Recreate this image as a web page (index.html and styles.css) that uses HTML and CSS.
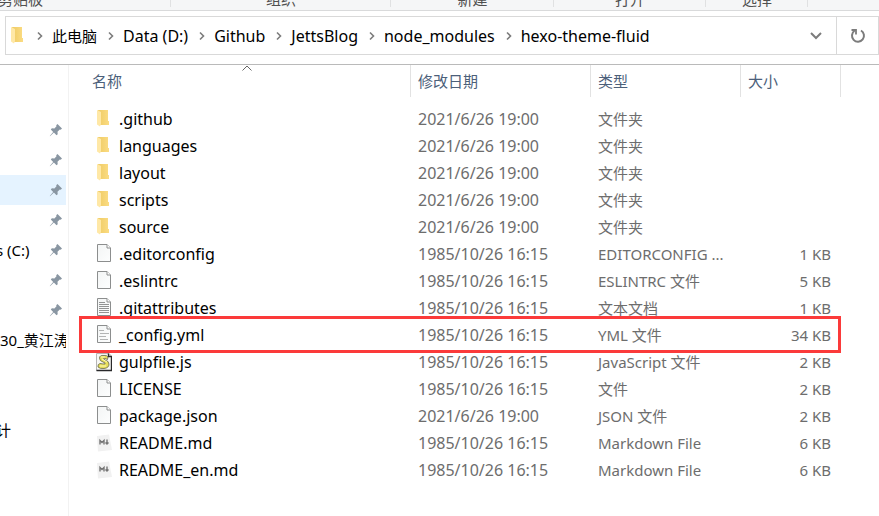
FILE: index.html
```html
<!DOCTYPE html>
<html lang="zh-CN">
<head>
<meta charset="utf-8">
<title>hexo-theme-fluid</title>
<link rel="stylesheet" href="styles.css">
</head>
<body>
<svg class="defs" aria-hidden="true">
  <defs>
    <linearGradient id="gold" x1="0" x2="1" y1="0" y2="0"><stop offset="0" stop-color="#efcb64"/><stop offset="1" stop-color="#fbdc83"/></linearGradient>
    <linearGradient id="paper" x1="0" x2="1" y1="0" y2="1"><stop offset="0" stop-color="#f3f5f5"/><stop offset="1" stop-color="#fdfefe"/></linearGradient>
    <symbol id="folder" viewBox="0 0 16 20">
      <path d="M2 1H12V12H13V16H4Z" fill="url(#gold)"/>
      <path d="M1 1L5 3V15L4 17.500L1 15.500Z" fill="#ffe8a6"/>
    </symbol>
    <symbol id="page" viewBox="0 0 16 20">
      <path d="M1.500 .5H11L14.500 4V17.500H1.500Z" fill="url(#paper)" stroke="#8c8e8e"/>
      <path d="M11 .5V4H14.500" fill="#fff" stroke="#8c8e8e"/>
    </symbol>
    <symbol id="text" viewBox="0 0 16 20">
      <use href="#page"/>
      <path d="M3 4.500H9M3 6.500H13M3 8.500H13M3 10.500H13M3 12.500H13M3 14.500H13" stroke="#929494"/>
    </symbol>
    <symbol id="config" viewBox="0 0 16 20">
      <use href="#page"/>
      <path d="M3 5.500H8M4 8.500H13M3 11.500H10M4 14.500H12" stroke="#b2b4b4"/>
    </symbol>
    <symbol id="script" viewBox="0 0 16 20">
      <path d="M.5 1.500H13L15.500 4V18.500H.5Z" fill="#f7f7f4" stroke="#b5b5b5"/>
      <path d="M.5 18.500H15.500V4M12.500 1.500V4.500H15.500" fill="none" stroke="#29292b" stroke-width="1.400"/>
      <path d="M12 5Q11 3 8 3.500Q3.500 3 3.500 6Q3.500 9 7 10Q10 11 9 12Q7 12 4 11.500Q1.500 12 2 15Q4 17 8 16.500Q13 16 13 12Q13 9 9 8Q7 7 8 6L11.500 7.500Z" fill="#e7df5c" stroke="#66664a" stroke-width=".8"/>
      <path d="M5 5H9M6 7L11 10M4 14H10" stroke="#fffbb4"/>
    </symbol>
    <symbol id="markdown" viewBox="0 0 16 20">
      <path d="M1 3L13 1.500L16 17L2 18.500Z" fill="#f1f1f1"/>
      <path d="M4 11.500V7.500L6 9.500L8 7.500V11.500M11 6.500V11M9.500 9.500L11 11L12.500 9.500" fill="none" stroke="#747474" stroke-width="1.400"/>
    </symbol>
    <symbol id="pin" viewBox="0 0 14 14">
      <path d="M8.500 1L13 5.500L11.700 6.800L10.800 6.500L8.500 8.800L8.700 11.200L7.500 12.200L4.900 9.600L1 13.200L.8 13L4.200 8.900L1.800 6.400L2.900 5.300L5.400 5.500L7.500 3.300L7.200 2.300Z" fill="#8996a2"/>
    </symbol>
    <symbol id="next" viewBox="0 0 8 10"><path d="M2 1.500L5.500 5L2 8.500" fill="none" stroke="#7c7c7c" stroke-width="1.600"/></symbol>
  </defs>
</svg>

<header class="ribbon">
  <span class="group first">剪贴板</span><span class="group">组织</span><span class="group">新建</span><span class="group">打开</span><span class="group">选择</span>
</header>

<div class="location">
  <nav class="path" aria-label="地址">
    <svg class="icon"><use href="#folder"/></svg>
    <svg class="next"><use href="#next"/></svg><a class="han" href="#">此电脑</a>
    <svg class="next"><use href="#next"/></svg><a href="#">Data (D:)</a>
    <svg class="next"><use href="#next"/></svg><a href="#">Github</a>
    <svg class="next"><use href="#next"/></svg><a href="#">JettsBlog</a>
    <svg class="next"><use href="#next"/></svg><a href="#">node_modules</a>
    <svg class="next"><use href="#next"/></svg><a href="#">hexo-theme-fluid</a>
  </nav>
  <button class="history" aria-label="以前的位置"><svg width="12" height="8" viewBox="0 0 12 8"><path d="M1 1L6 6L11 1" fill="none" stroke="#7c7c7c" stroke-width="2"/></svg></button>
  <button class="refresh" aria-label="刷新"><svg width="16" height="16" viewBox="0 0 16 16"><path d="M11 2.500A6 6 0 1 1 4.500 2.800" fill="none" stroke="#7c7c7c" stroke-width="2"/><path d="M1.500 2H6V6.500" fill="none" stroke="#7c7c7c" stroke-width="1.800"/></svg></button>
</div>

<main class="explorer">
  <nav class="sidebar" aria-label="导航">
    <a class="place" href="#" aria-label="固定"><svg class="pin"><use href="#pin"/></svg></a>
    <a class="place" href="#" aria-label="固定"><svg class="pin"><use href="#pin"/></svg></a>
    <a class="place current" href="#" aria-label="固定"><svg class="pin"><use href="#pin"/></svg></a>
    <a class="place" href="#" aria-label="固定"><svg class="pin"><use href="#pin"/></svg></a>
    <a class="place" href="#"><span class="cut">s (C:)</span><svg class="pin"><use href="#pin"/></svg></a>
    <a class="place" href="#" aria-label="固定"><svg class="pin"><use href="#pin"/></svg></a>
    <a class="place" href="#" aria-label="固定"><svg class="pin"><use href="#pin"/></svg></a>
    <a class="place" href="#"><span>30_黄江涛</span></a>
    <span class="place"></span>
    <span class="place"></span>
    <a class="place" href="#"><span class="cut">计</span></a>
  </nav>

  <div class="content">
    <table class="files">
      <colgroup><col><col class="date"><col class="type"><col class="size"></colgroup>
      <thead>
        <tr><th>名称<svg class="sort" viewBox="0 0 10 6"><path d="M.5 5.500L5 1L9.500 5.500" fill="none" stroke="#666"/></svg></th><th>修改日期</th><th>类型</th><th>大小</th></tr>
      </thead>
      <tbody>
        <tr><td><span class="name"><svg class="icon"><use href="#folder"/></svg>.github</span></td><td>2021/6/26 19:00</td><td>文件夹</td><td></td></tr>
        <tr><td><span class="name"><svg class="icon"><use href="#folder"/></svg>languages</span></td><td>2021/6/26 19:00</td><td>文件夹</td><td></td></tr>
        <tr><td><span class="name"><svg class="icon"><use href="#folder"/></svg>layout</span></td><td>2021/6/26 19:00</td><td>文件夹</td><td></td></tr>
        <tr><td><span class="name"><svg class="icon"><use href="#folder"/></svg>scripts</span></td><td>2021/6/26 19:00</td><td>文件夹</td><td></td></tr>
        <tr><td><span class="name"><svg class="icon"><use href="#folder"/></svg>source</span></td><td>2021/6/26 19:00</td><td>文件夹</td><td></td></tr>
        <tr><td><span class="name"><svg class="icon"><use href="#page"/></svg>.editorconfig</span></td><td>1985/10/26 16:15</td><td>EDITORCONFIG ...</td><td>1 KB</td></tr>
        <tr><td><span class="name"><svg class="icon"><use href="#page"/></svg>.eslintrc</span></td><td>1985/10/26 16:15</td><td>ESLINTRC 文件</td><td>5 KB</td></tr>
        <tr><td><span class="name"><svg class="icon"><use href="#text"/></svg>.gitattributes</span></td><td>1985/10/26 16:15</td><td>文本文档</td><td>1 KB</td></tr>
        <tr class="marked"><td><span class="name"><svg class="icon"><use href="#config"/></svg>_config.yml</span></td><td>1985/10/26 16:15</td><td>YML 文件</td><td>34 KB</td></tr>
        <tr><td><span class="name"><svg class="icon"><use href="#script"/></svg>gulpfile.js</span></td><td>1985/10/26 16:15</td><td>JavaScript 文件</td><td>2 KB</td></tr>
        <tr><td><span class="name"><svg class="icon"><use href="#page"/></svg>LICENSE</span></td><td>1985/10/26 16:15</td><td>文件</td><td>2 KB</td></tr>
        <tr><td><span class="name"><svg class="icon"><use href="#page"/></svg>package.json</span></td><td>2021/6/26 19:00</td><td>JSON 文件</td><td>2 KB</td></tr>
        <tr><td><span class="name"><svg class="icon"><use href="#markdown"/></svg>README.md</span></td><td>1985/10/26 16:15</td><td>Markdown File</td><td>6 KB</td></tr>
        <tr><td><span class="name"><svg class="icon"><use href="#markdown"/></svg>README_en.md</span></td><td>1985/10/26 16:15</td><td>Markdown File</td><td>6 KB</td></tr>
      </tbody>
    </table>
  </div>
</main>
</body>
</html>
```
FILE: styles.css
```css
* { box-sizing: border-box; }

body {
  margin: 0;
  min-height: 100vh;
  display: flex;
  flex-direction: column;
  background: #fff;
  color: #000;
  font: 15px/20px "Noto Sans", "Noto Sans CJK SC", sans-serif;
}

a { color: inherit; text-decoration: none; }
svg { display: block; flex: none; }
.defs { position: absolute; width: 0; height: 0; }
.icon { width: 16px; height: 20px; }

.ribbon {
  display: grid;
  grid-template-columns: 171px 220px 163px 152px 102px;
  grid-template-rows: 100%;
  align-items: end;
  height: 11px;
  overflow: hidden;
  background: #f5f6f7;
  border-bottom: 1px solid #d9dadb;
  color: #505050;
}
.group { height: 24px; padding-top: 3px; text-align: center; position: relative; }
.group::after { content: ""; position: absolute; right: 0; bottom: 3px; width: 1px; height: 20px; background: #e0e1e2; }
.group.first { text-align: left; margin-left: -2px; }

.location {
  display: flex;
  height: 39px;
  margin: 5px 0 9px 5px;
  border: 1px solid #d9d9d9;
}
.path { display: flex; align-items: center; flex: 1; padding-left: 4px; white-space: nowrap; overflow: hidden; font-size: 16px; }
.han { font-size: 15px; }
.next { width: 8px; height: 10px; margin: 0 8px 0 10px; }
button { display: flex; align-items: center; justify-content: center; padding: 0; border: 0; background: none; }
.history { width: 40px; }
.refresh { width: 42px; border-left: 1px solid #d9d9d9; }

.explorer { display: flex; flex: 1; border-top: 1px solid #bababa; }
.sidebar { width: 69px; padding: 50px 2px 0 0; border-right: 1px solid #f2f2f2; }
.place { display: flex; align-items: center; height: 30px; overflow: hidden; white-space: nowrap; }
.current { background: #e5f3ff; }
.cut { margin-left: -4px; }
.pin { width: 14px; height: 14px; margin-left: auto; margin-right: 3px; }

.content { flex: 1; padding-right: 38px; }
.files { width: 100%; table-layout: fixed; border-collapse: separate; border-spacing: 0; }
.date { width: 180px; }
.type { width: 150px; }
.size { width: 100px; }
th { position: relative; height: 32px; padding: 0 7px; border-right: 1px solid #e2e2e2; color: #4c607a; font-weight: 400; text-align: left; }
th:first-child { padding-left: 23px; }
.sort { position: absolute; top: 0; left: calc(50% + 2px); width: 10px; height: 6px; }
tbody::before { content: ""; display: block; height: 8px; }
td { height: 27px; padding: 0 7px; color: #6d6d6d; white-space: nowrap; }
td:first-child { padding-left: 27px; color: #000; font-size: 16px; }
td:nth-child(2) { font-size: 16px; }
td:last-child { padding-right: 10px; text-align: right; }
.name { display: flex; align-items: center; gap: 7px; }

.marked { position: relative; }
.marked td:first-child::after { content: ""; position: absolute; inset: -5px 0 -5px 10px; border: 3px solid #fb3a3a; }
```
